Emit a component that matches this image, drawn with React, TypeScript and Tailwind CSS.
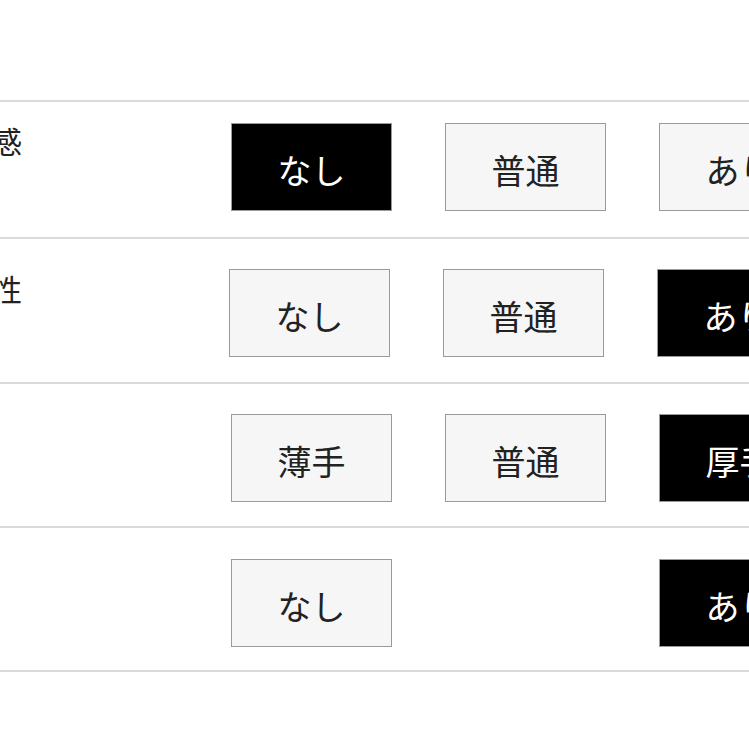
const FONT = { fontFamily: '"Noto Sans CJK JP", "Noto Sans", sans-serif' };

type Row = {
  label: string;
  options: (string | null)[];
  selected: number;
  labelTop: string;
  btnTop: string;
  btnLeft: string;
  height: string;
};

const ROWS: Row[] = [
  { label: "透け感", options: ["なし", "普通", "あり"], selected: 0, labelTop: "pt-[21px]", btnTop: "pt-[21px]", btnLeft: "ml-[209px]", height: "h-[137px]" },
  { label: "伸縮性", options: ["なし", "普通", "あり"], selected: 2, labelTop: "pt-[32px]", btnTop: "pt-[30px]", btnLeft: "ml-[207px]", height: "h-[145px]" },
  { label: "厚み", options: ["薄手", "普通", "厚手"], selected: 2, labelTop: "pt-[32px]", btnTop: "pt-[30px]", btnLeft: "ml-[209px]", height: "h-[144px]" },
  { label: "裏地", options: ["なし", null, "あり"], selected: 2, labelTop: "pt-[32px]", btnTop: "pt-[31px]", btnLeft: "ml-[209px]", height: "h-[144px]" },
];

function Option({ text, active }: { text: string | null; active: boolean }) {
  if (!text) return <div className="w-[161px] h-[88px] shrink-0" />;
  return (
    <div
      className={
        "w-[161px] h-[88px] shrink-0 flex items-center justify-center pt-[4px] border border-[#9a9a9a] text-[34px] " +
        (active ? "bg-black text-white" : "bg-[#f6f6f6] text-[#222]")
      }
    >
      {text}
    </div>
  );
}

export default function App() {
  return (
    <main className="w-[749px] h-[749px] overflow-hidden bg-white" style={FONT}>
      <div className="h-[100px]" />
      <div className="border-t-2 border-[#dadada]">
        {ROWS.map((r) => (
          <div key={r.label} className={"flex border-b-2 border-[#dadada] " + r.height}>
            <div className={"w-[22px] shrink-0 " + r.labelTop}>
              <div className="-ml-[68px] whitespace-nowrap text-[30px] leading-[34px] text-[#222]">{r.label}</div>
            </div>
            <div className={"flex gap-[53px] " + r.btnLeft + " " + r.btnTop}>
              {r.options.map((o, i) => (
                <Option key={i} text={o} active={i === r.selected} />
              ))}
            </div>
          </div>
        ))}
      </div>
    </main>
  );
}
